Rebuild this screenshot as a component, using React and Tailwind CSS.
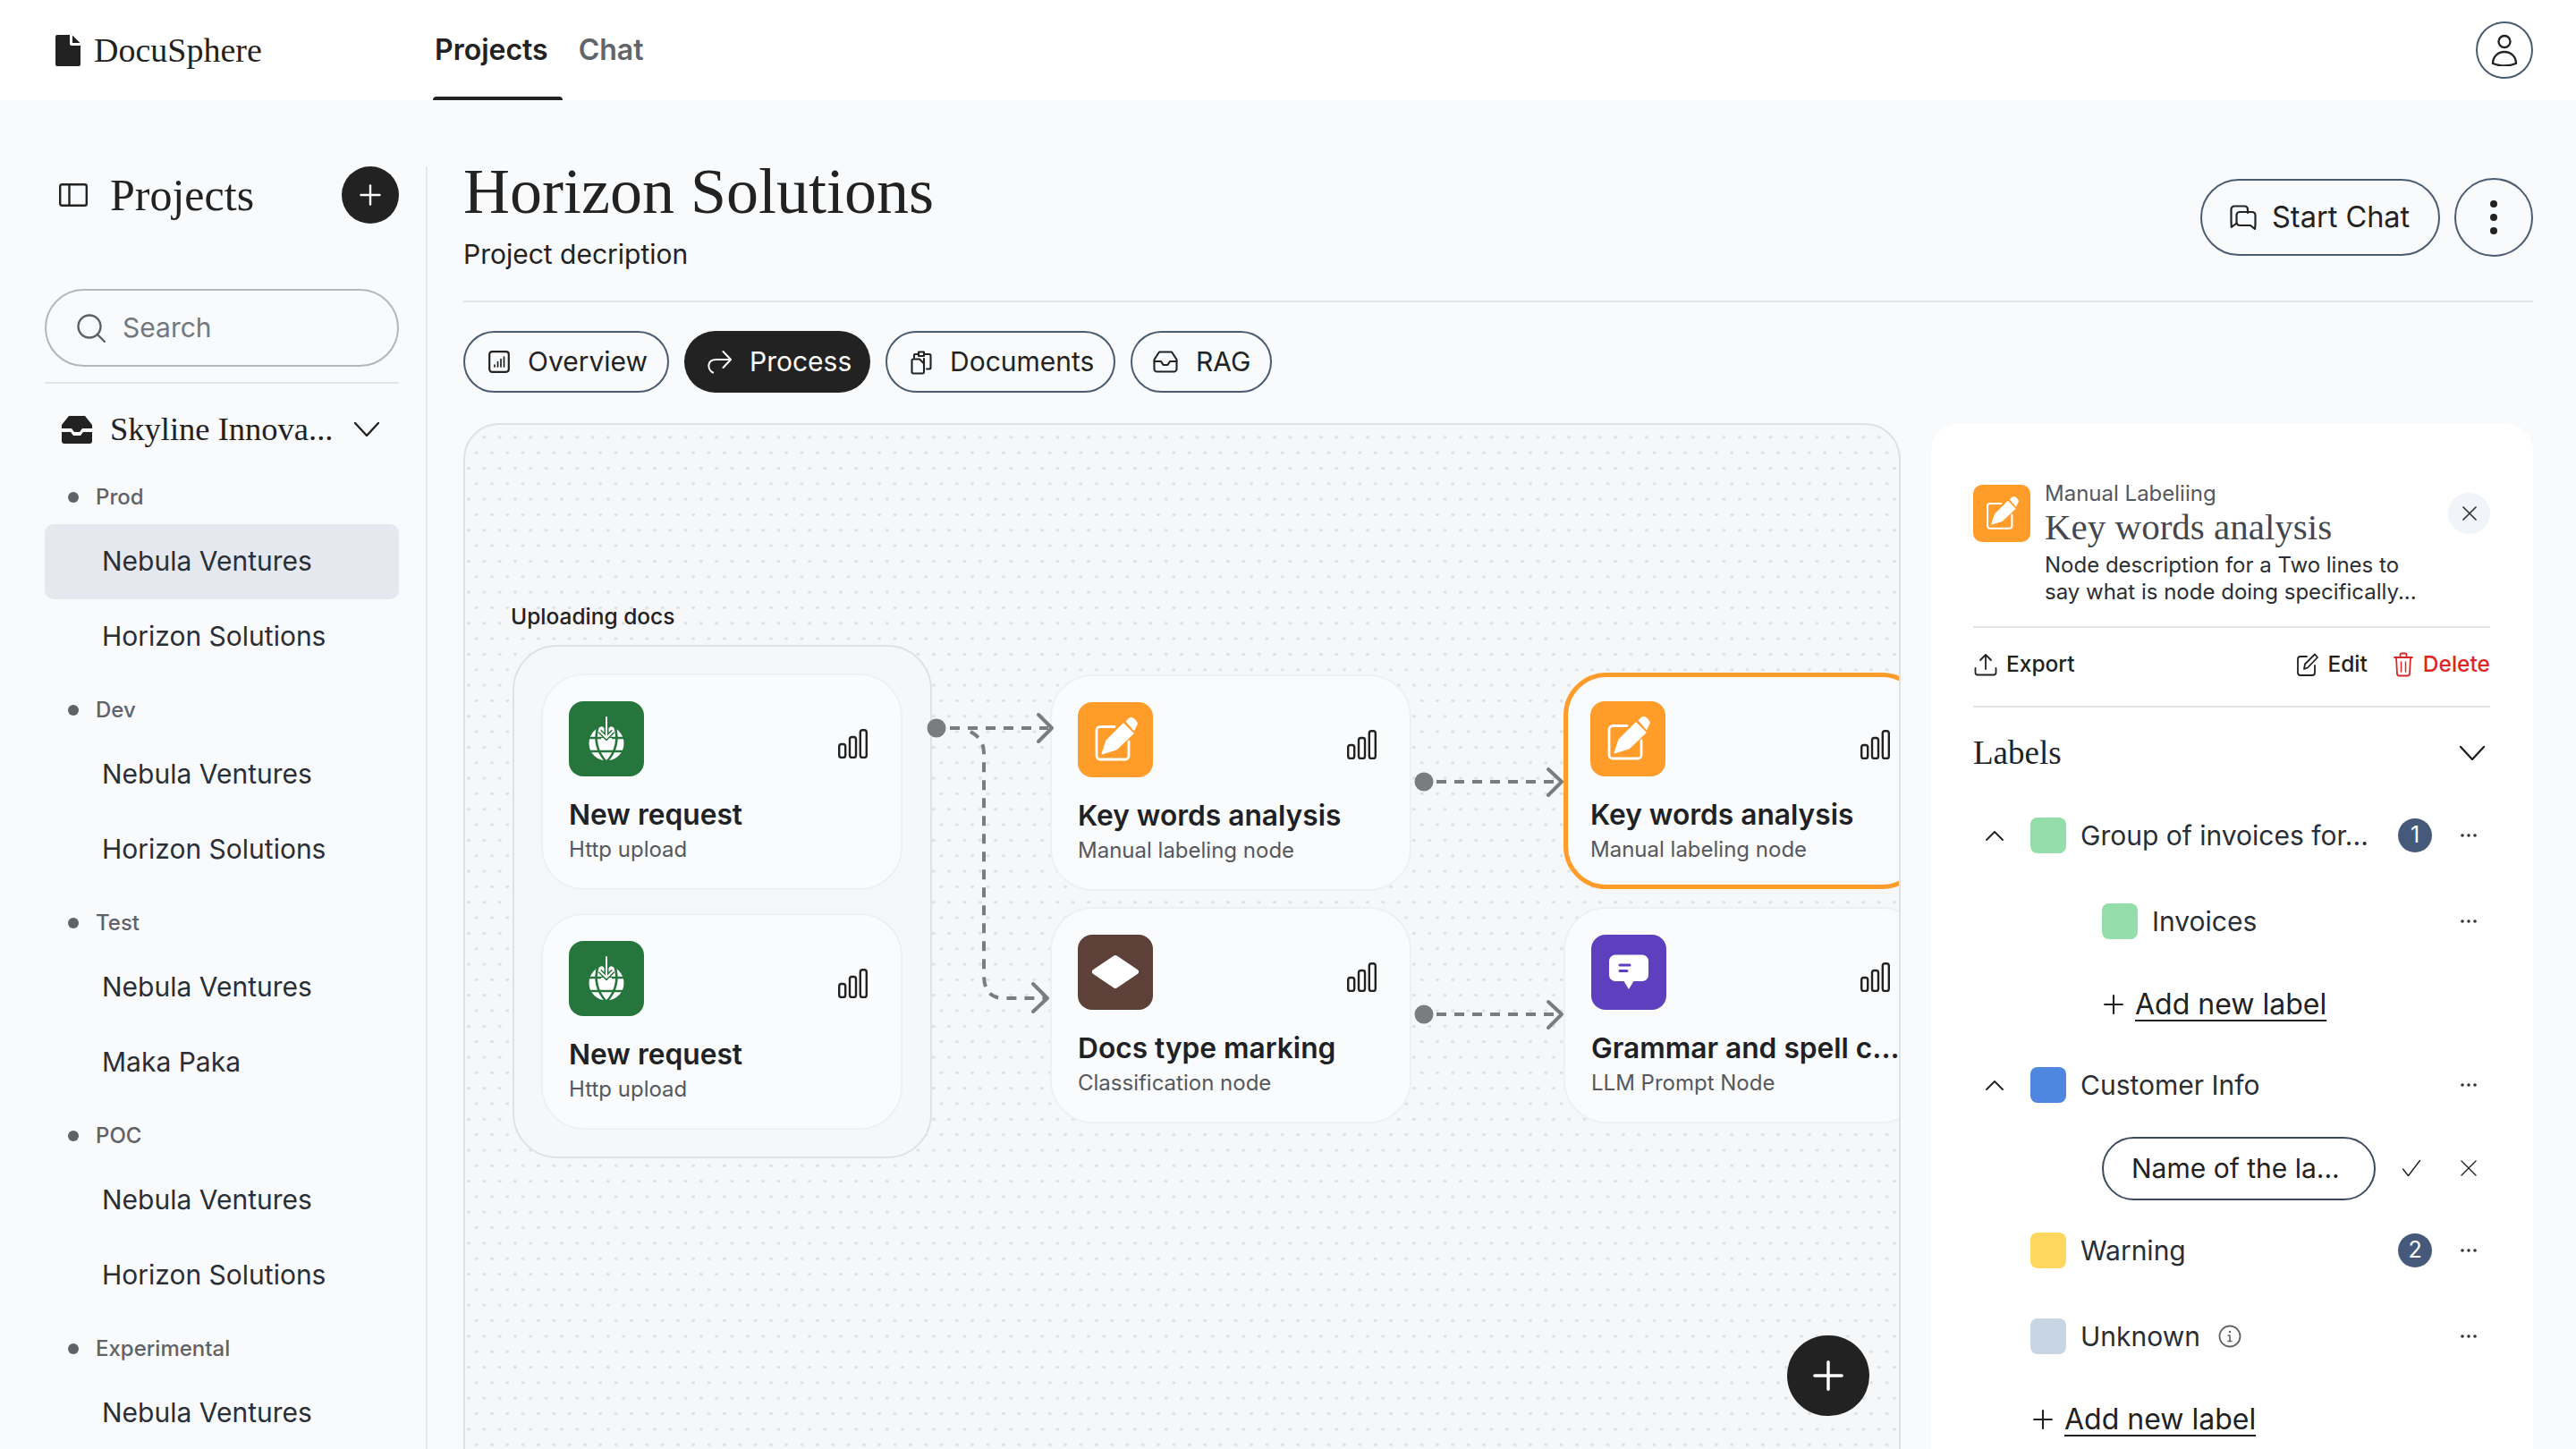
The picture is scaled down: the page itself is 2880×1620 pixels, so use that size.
import { Plus } from 'lucide-react'

const serif = "font-['Liberation_Serif',serif]"

const groups = [
  { name: 'Prod', items: ['Nebula Ventures', 'Horizon Solutions'] },
  { name: 'Dev', items: ['Nebula Ventures', 'Horizon Solutions'] },
  { name: 'Test', items: ['Nebula Ventures', 'Maka Paka'] },
  { name: 'POC', items: ['Nebula Ventures', 'Horizon Solutions'] },
  { name: 'Experimental', items: ['Nebula Ventures'] },
]

function Svg({ w, h, box, children, className = '' }) {
  return (
    <svg
      width={w}
      height={h}
      viewBox={box || `0 0 ${w} ${h}`}
      fill="none"
      stroke="currentColor"
      strokeLinecap="round"
      strokeLinejoin="round"
      className={`shrink-0 ${className}`}
    >
      {children}
    </svg>
  )
}

function Chevron({ up, w = 28, h = 16, sw = 2.4, className }) {
  const d = up ? `M1 ${h - 1}L${w / 2} 1L${w - 1} ${h - 1}` : `M1 1L${w / 2} ${h - 1}L${w - 1} 1`
  return (
    <Svg w={w} h={h} className={className}>
      <path d={d} strokeWidth={sw} />
    </Svg>
  )
}

function Dots() {
  return (
    <svg width="18" height="4" viewBox="0 0 18 4" className="shrink-0 text-[#333]" fill="currentColor">
      <circle cx="2" cy="2" r="1.8" />
      <circle cx="9" cy="2" r="1.8" />
      <circle cx="16" cy="2" r="1.8" />
    </svg>
  )
}

function Bars() {
  return (
    <Svg w={33} h={33} className="text-[#222]">
      <rect x="1.2" y="17" width="7" height="15" rx="2.6" strokeWidth="2.4" />
      <rect x="13" y="9" width="7" height="23" rx="2.6" strokeWidth="2.4" />
      <rect x="24.8" y="1.2" width="7" height="30.8" rx="2.6" strokeWidth="2.4" />
    </Svg>
  )
}

function GlobeIcon() {
  return (
    <svg width="84" height="84" viewBox="0 0 84 84" className="block">
      <circle cx="42" cy="47" r="19.5" fill="#fff" />
      <g fill="none" stroke="#26753c" strokeWidth="2.6">
        <path d="M22 41H62M24 56H60" />
        <path d="M33 27C28 42 31 56 42 68C53 56 56 42 51 27" />
        <path d="M42 30V24" />
      </g>
      <path d="M42 32L32 24H52Z" fill="#26753c" />
      <path d="M36 41H48V52H36Z" fill="#fff" />
      <path d="M42 18V41M34.5 33.5L42 41L49.5 33.5" fill="none" stroke="#26753c" strokeWidth="5" />
      <path d="M42 18V41M34.5 33.5L42 41L49.5 33.5" fill="none" stroke="#fff" strokeWidth="2" strokeLinecap="round" strokeLinejoin="round" />
    </svg>
  )
}

function PencilIcon({ size = 84 }) {
  return (
    <svg width={size} height={size} viewBox="0 0 84 84" className="block">
      <path d="M41 27.5H25a4 4 0 0 0-4 4V60a4 4 0 0 0 4 4H53a4 4 0 0 0 4-4V44" fill="none" stroke="#fff" strokeWidth="2.8" strokeLinecap="round" />
      <path d="M27 58L32 43L51 24L62 35L43 53Z" fill="#fff" stroke="#fff" strokeWidth="1.2" strokeLinejoin="round" />
      <path d="M53.5 21.5L57 18Q60 16 63 18.5L65.5 21Q68 24 65.5 27L63 32.5Z" fill="#fff" />
    </svg>
  )
}

function DiamondIcon() {
  return (
    <svg width="84" height="84" viewBox="0 0 84 84" className="block">
      <path d="M42 26L65 41.5L42 57L19 41.5Z" fill="#fff" stroke="#fff" strokeWidth="6" strokeLinejoin="round" />
    </svg>
  )
}

function BubbleIcon() {
  return (
    <svg width="84" height="84" viewBox="0 0 84 84" className="block">
      <path d="M27 22.5H57a7 7 0 0 1 7 7V45a7 7 0 0 1-7 7H47.5L42 61L36.5 52H27a7 7 0 0 1-7-7V29.5a7 7 0 0 1 7-7Z" fill="#fff" />
      <path d="M32 34H43M32 40.5H40" fill="none" stroke="#5e3fbe" strokeWidth="3" strokeLinecap="round" />
    </svg>
  )
}

function Node({ title, sub, tone, icon, selected, className }) {
  return (
    <div
      className={`w-[404px] h-[242px] rounded-[48px] ${selected ? 'border-[5px] border-[#ff9c2a] pl-[25px] pt-[27px]' : 'border-2 border-[#eef0f2] pl-[29px] pt-[29px]'} bg-[#fafbfc] ${className}`}
    >
      <div className="flex">
        <div className={`w-[84px] h-[84px] rounded-[16px] overflow-hidden ${tone}`}>{icon}</div>
        <div className={selected ? 'absolute left-[327px] top-[59px]' : 'absolute left-[330px] top-[60px]'}>
          <Bars />
        </div>
      </div>
      <div className="mt-[23px] text-[31.7px] leading-[40px] font-semibold text-[#202124] whitespace-nowrap">{title}</div>
      <div className="mt-[2px] text-[24px] leading-[34px] text-[#55585e] whitespace-nowrap">{sub}</div>
    </div>
  )
}

function Tab({ icon, label, active, className }) {
  return (
    <div
      className={`h-[69px] rounded-full flex items-center gap-[20px] text-[30px] whitespace-nowrap ${active ? 'bg-[#222] text-white' : 'border-2 border-[#4b5b70] text-[#222]'} ${className}`}
    >
      {icon}
      <span>{label}</span>
    </div>
  )
}

function Swatch({ color }) {
  return <div className={`w-[40px] h-[40px] rounded-[8px] shrink-0 ${color}`} />
}

function Badge({ n }) {
  return (
    <div className="w-[38px] h-[38px] rounded-full bg-[#46597a] text-white text-[25px] flex items-center justify-center mr-[32px]">
      {n}
    </div>
  )
}

function AddLabel({ className }) {
  return (
    <div className={`flex items-center h-[60px] text-[#222] ${className}`}>
      <Plus size={34} strokeWidth={1.5} className="shrink-0" />
      <span className="ml-[7px] text-[32px] leading-[40px] underline decoration-2 underline-offset-[6px]">Add new label</span>
    </div>
  )
}

export default function App() {
  return (
    <div className="w-[2880px] h-[1620px] overflow-hidden flex flex-col bg-[#f8fafc] font-['Inter',sans-serif] text-[#222]">
      <header className="h-[112px] bg-white flex items-center shrink-0 pl-[62px] pr-[48px]">
        <svg width="28" height="35" viewBox="0 0 28 35" className="shrink-0">
          <path d="M2 0H16V10a2 2 0 0 0 2 2H28V33a2 2 0 0 1-2 2H2a2 2 0 0 1-2-2V2a2 2 0 0 1 2-2Z" fill="#222" />
          <path d="M19 0.5L27.5 9H19Z" fill="#222" />
        </svg>
        <div className={`${serif} ml-[15px] w-[379px] text-[38px] leading-[44px] text-[#222]`}>DocuSphere</div>
        <nav className="flex h-full items-center text-[32px]">
          <div className="relative h-full flex items-center pl-[2px] pr-[16px] font-semibold">
            Projects
            <div className="absolute left-0 right-0 bottom-0 h-[4px] rounded-t-[4px] bg-[#222]" />
          </div>
          <div className="ml-[18px] font-semibold text-[#62656a]">Chat</div>
        </nav>
        <div className="ml-auto w-[64px] h-[64px] rounded-full border-2 border-[#4b5b70] flex items-center justify-center">
          <Svg w={30} h={36} className="text-[#222]">
            <circle cx="15" cy="8.5" r="6.5" strokeWidth="2.4" />
            <path d="M2 33C2 25 8 20 15 20C22 20 28 25 28 33C20 36 10 36 2 33Z" strokeWidth="2.4" />
          </Svg>
        </div>
      </header>

      <div className="flex flex-1 min-h-0 pt-[74px]">
        <aside className="w-[478px] shrink-0 pl-[50px] pr-[30px] border-r-2 border-[#e6e8ec]">
          <div className="h-[64px] flex items-center">
            <Svg w={32} h={26} className="ml-[16px] text-[#222]">
              <rect x="1.2" y="1.2" width="29.6" height="23.6" rx="2" strokeWidth="2.4" />
              <path d="M11.5 1.2V24.8" strokeWidth="2.4" />
            </Svg>
            <div className={`${serif} ml-[25px] text-[50px] leading-[56px]`}>Projects</div>
            <div className="ml-auto w-[64px] h-[64px] rounded-full bg-[#222] flex items-center justify-center text-white">
              <Plus size={36} strokeWidth={1.6} />
            </div>
          </div>
          <div className="mt-[73px] h-[87px] rounded-full border-2 border-[#b4b6ba] flex items-center pl-[34px] text-[30px] text-[#74777c]">
            <Svg w={32} h={32} className="text-[#5c5f64]">
              <circle cx="14" cy="14" r="12.5" strokeWidth="2.4" />
              <path d="M23 23L31 31" strokeWidth="2.4" />
            </Svg>
            <span className="ml-[19px]">Search</span>
          </div>
          <div className="mt-[17px] h-[2px] bg-[#e2e4e8]" />
          <div className="mt-[21px] h-[60px] flex items-center">
            <svg width="36" height="31" viewBox="0 0 36 31" className="ml-[18px] shrink-0">
              <path d="M9 0H27L35 10V14H24L21 18H15L12 14H1V10Z" fill="#222" />
              <path d="M1 18H11L14 22H22L25 18H35V28a3 3 0 0 1-3 3H4a3 3 0 0 1-3-3Z" fill="#222" />
            </svg>
            <div className={`${serif} ml-[19px] text-[36.5px] leading-[48px] whitespace-nowrap`}>Skyline Innova...</div>
            <Chevron className="ml-auto mr-[22px]" />
          </div>
          <div className="mt-[14px]">
            {groups.map((g, gi) => (
              <div key={g.name} className="mb-[8.2px]">
                <div className="h-[62px] pt-[1px] flex items-center pl-[26px] text-[24px] font-medium text-[#5f6368]">
                  <div className="w-[12px] h-[12px] rounded-full bg-[#5f6368]" />
                  <span className="ml-[19px]">{g.name}</span>
                </div>
                {g.items.map((item, i) => (
                  <div
                    key={item}
                    className={`h-[84px] pb-[2px] rounded-[10px] flex items-center pl-[64px] text-[30px] text-[#2a2e35] ${gi === 0 && i === 0 ? 'bg-[#e5e8ef]' : ''}`}
                  >
                    {item}
                  </div>
                ))}
              </div>
            ))}
          </div>
        </aside>

        <main className="flex-1 min-w-0 pl-[40px] pr-[48px] flex flex-col">
          <div className="h-[150px] border-b-2 border-[#e2e4e8] flex justify-between shrink-0 box-content -mb-[1px]">
            <div>
              <h1 className={`${serif} -mt-[2px] text-[72px] leading-[60px] text-[#222] whitespace-nowrap`}>Horizon Solutions</h1>
              <p className="mt-[20px] text-[30px] leading-[40px] text-[#222]">Project decription</p>
            </div>
            <div className="flex gap-[16px] mt-[14px]">
              <div className="h-[86px] w-[268px] rounded-full border-2 border-[#4b5b70] flex items-center pl-[31px] text-[32.500px] text-[#222]">
                <Svg w={30} h={28} className="text-[#222]">
                  <path d="M20 9V5a3.5 3.5 0 0 0-3.5-3.5H5A3.5 3.5 0 0 0 1.5 5V19L1.8 25L7 21" strokeWidth="2.2" />
                  <path d="M11 8H25a3.5 3.5 0 0 1 3.5 3.5V22L28 27L23 23H11a3.5 3.5 0 0 1-3.5-3.5V11.5A3.5 3.5 0 0 1 11 8Z" strokeWidth="2.2" />
                </Svg>
                <span className="ml-[17px]">Start Chat</span>
              </div>
              <div className="w-[88px] h-[88px] -mt-[1px] rounded-full border-2 border-[#4b5b70] flex flex-col items-center justify-center gap-[7px]">
                <div className="w-[8px] h-[8px] rounded-full bg-[#222]" />
                <div className="w-[8px] h-[8px] rounded-full bg-[#222]" />
                <div className="w-[8px] h-[8px] rounded-full bg-[#222]" />
              </div>
            </div>
          </div>

          <div className="mt-[33px] flex gap-[17px] shrink-0">
            <Tab
              className="w-[230px] pl-[26px]"
              label="Overview"
              icon={
                <Svg w={24} h={25}>
                  <rect x="1.2" y="1.2" width="21.6" height="22.6" rx="3" strokeWidth="2.2" />
                  <path d="M7 18V16M10.5 18V12.5M14 18V9.5M17.5 18V7" strokeWidth="1.7" />
                </Svg>
              }
            />
            <Tab
              className="w-[208px] pl-[25px]"
              active
              label="Process"
              icon={
                <Svg w={28} h={27}>
                  <path d="M7 25.5C1 22.5 -0.5 11 11 11H26M18.5 2L27 11L18.5 20" strokeWidth="2" />
                </Svg>
              }
            />
            <Tab
              className="w-[257px] pl-[26px]"
              label="Documents"
              icon={
                <Svg w={24} h={28}>
                  <path d="M8 5H5a1 1 0 0 0-1 1V9M16 5H21a1.5 1.5 0 0 1 1.5 1.5V20a1.5 1.5 0 0 1-1.5 1.5H18" strokeWidth="2.1" />
                  <path d="M9 2.5H15V7H9Z" strokeWidth="2.1" />
                  <path d="M3 10.5H10L15 15.5V25a1.5 1.5 0 0 1-1.5 1.5H3A1.5 1.5 0 0 1 1.5 25V12a1.5 1.5 0 0 1 1.5-1.5Z" strokeWidth="2.1" />
                  <path d="M15 10V15.5" strokeWidth="2.1" />
                </Svg>
              }
            />
            <Tab
              className="w-[158px] pl-[23px] gap-[18px]"
              label="RAG"
              icon={
                <Svg w={28} h={25}>
                  <path d="M7 1.5H21L26.5 10V20.5a3 3 0 0 1-3 3H4.5a3 3 0 0 1-3-3V10Z" strokeWidth="2.1" />
                  <path d="M1.5 12H9L11.5 16H16.5L19 12H26.5" strokeWidth="2.1" />
                </Svg>
              }
            />
          </div>

          <div className="mt-[34px] flex flex-1 min-h-0">
            <section className="relative w-[1607px] h-[1200px] shrink-0 overflow-hidden rounded-t-[40px] border-2 border-[#e0e1e4] bg-[#f6f7f9] bg-[radial-gradient(circle,#dddfe3_1.6px,transparent_1.9px),radial-gradient(circle,#dddfe3_1.6px,transparent_1.9px)] bg-[length:17.33px_34.66px] bg-[position:12.6px_31.2px,3.95px_13.9px]">
              <div className="absolute left-[51px] top-[199px] text-[24.5px] leading-[30px] font-medium text-[#222]">Uploading docs</div>

              <div className="absolute left-[53px] top-[246px] w-[469px] h-[574px] rounded-[50px] border-2 border-[#dfe1e5] bg-[#f6f7f9] pl-[30px] pt-[30px] flex flex-col gap-[26px]">
                <Node className="relative" title="New request" sub="Http upload" tone="bg-[#26753c]" icon={<GlobeIcon />} />
                <Node className="relative" title="New request" sub="Http upload" tone="bg-[#26753c]" icon={<GlobeIcon />} />
              </div>

              <Node className="absolute left-[654px] top-[279px]" title="Key words analysis" sub="Manual labeling node" tone="bg-[#ff9c2a]" icon={<PencilIcon />} />
              <Node className="absolute left-[654px] top-[539px]" title="Docs type marking" sub="Classification node" tone="bg-[#5d4037]" icon={<DiamondIcon />} />
              <Node selected className="absolute left-[1228px] top-[277px]" title="Key words analysis" sub="Manual labeling node" tone="bg-[#ff9c2a]" icon={<PencilIcon />} />
              <Node className="absolute left-[1228px] top-[539px]" title="Grammar and spell c..." sub="LLM Prompt Node" tone="bg-[#5e3fbe]" icon={<BubbleIcon />} />

              <svg width="1604" height="900" viewBox="520 475 1604 900" fill="none" className="absolute left-0 top-0 text-[#7b7c7e]" stroke="currentColor" strokeLinecap="round" strokeLinejoin="round">
                <circle cx="1047" cy="814" r="10.5" fill="currentColor" stroke="none" />
                <circle cx="1592" cy="874" r="10.5" fill="currentColor" stroke="none" />
                <circle cx="1592" cy="1134" r="10.5" fill="currentColor" stroke="none" />
                <g strokeWidth="4" strokeDasharray="11 9" strokeLinecap="butt">
                  <path d="M1062 814H1172" />
                  <path d="M1085 818Q1100 826 1100 842V1090Q1100 1116 1122 1116H1168" />
                  <path d="M1606 874H1742" />
                  <path d="M1606 1134H1742" />
                </g>
                <g strokeWidth="4">
                  <path d="M1161 799L1176 814L1161 829" />
                  <path d="M1155 1100L1171 1116L1155 1131" />
                  <path d="M1731 860L1746 874L1731 889" />
                  <path d="M1731 1120L1746 1134L1731 1149" />
                </g>
              </svg>

              <div className="absolute left-[1478px] top-[1018px] w-[92px] h-[90px] rounded-full bg-[#222] flex items-center justify-center text-white">
                <Plus size={52} strokeWidth={1.6} />
              </div>
            </section>

            <section className="ml-[34px] flex-1 min-w-0 h-[1200px] bg-white rounded-t-[32px] pl-[47px] pr-[48px] pt-[64px]">
              <div className="flex">
                <div className="w-[64px] h-[64px] mt-[5px] rounded-[10px] overflow-hidden bg-[#ff9c2a] shrink-0">
                  <PencilIcon size={64} />
                </div>
                <div className="ml-[16px]">
                  <div className="text-[24px] leading-[30px] text-[#55585e]">Manual Labeliing</div>
                  <div className={`${serif} -mt-[1px] text-[41px] leading-[46px] text-[#44474d] whitespace-nowrap`}>Key words analysis</div>
                  <div className="mt-[5px] text-[24px] leading-[30px] text-[#2a2e35] whitespace-nowrap">
                    Node description for a Two lines to
                    <br />
                    say what is node doing specifically...
                  </div>
                </div>
                <div className="ml-auto mt-[14px] w-[47px] h-[46px] rounded-full bg-[#f1f4f8] flex items-center justify-center text-[#333] shrink-0">
                  <Svg w={16} h={16}>
                    <path d="M1 1L15 15M15 1L1 15" strokeWidth="1.7" />
                  </Svg>
                </div>
              </div>
              <div className="mt-[23px] h-[2px] bg-[#e2e4e8]" />
              <div className="h-[81px] pb-[6px] flex items-center text-[24.5px] font-medium border-b-2 border-[#e2e4e8] box-content">
                <Svg w={26} h={26} className="ml-[1px] text-[#222]">
                  <path d="M13 18V2M7 8L13 2L19 8" strokeWidth="1.8" />
                  <path d="M1.5 17V22a2.5 2.5 0 0 0 2.5 2.5H22a2.5 2.5 0 0 0 2.5-2.5V17" strokeWidth="1.8" />
                </Svg>
                <span className="ml-[10px]">Export</span>
                <Svg w={24} h={26} className="ml-auto text-[#222]">
                  <path d="M11 4H4a3 3 0 0 0-3 3V22a3 3 0 0 0 3 3H17a3 3 0 0 0 3-3V14" strokeWidth="1.8" />
                  <path d="M8 18L9 12.5L20 1.5L23 5L12 16.5Z" strokeWidth="1.8" />
                </Svg>
                <span className="ml-[10px]">Edit</span>
                <Svg w={22} h={28} className="ml-[29px] text-[#dc2626]">
                  <path d="M1 6H21M7.5 6V3a1.5 1.5 0 0 1 1.5-1.5H13A1.5 1.5 0 0 1 14.5 3V6" strokeWidth="1.8" />
                  <path d="M3 6L4 24a2.5 2.5 0 0 0 2.5 2.5H15.500A2.5 2.5 0 0 0 18 24L19 6" strokeWidth="1.8" />
                  <path d="M8.500 11V22M13.500 11V22" strokeWidth="1.5" />
                </Svg>
                <span className="ml-[11px] text-[#dc2626]">Delete</span>
              </div>
              <div className="h-[102px] flex items-center justify-between pr-[6px]">
                <div className={`${serif} text-[37px] leading-[48px] text-[#222]`}>Labels</div>
                <Chevron className="text-[#222]" />
              </div>

              <div className="text-[30px] text-[#2a2e35]">
                <div className="mt-[11px] h-[60px] flex items-center pl-[14px]">
                  <Chevron up w={20} h={11} sw={1.9} className="text-[#222]" />
                  <div className="ml-[30px]">
                    <Swatch color="bg-[#93deaa]" />
                  </div>
                  <span className="ml-[16px] whitespace-nowrap">Group of invoices for...</span>
                  <div className="ml-auto flex items-center pr-[15px]">
                    <Badge n="1" />
                    <Dots />
                  </div>
                </div>
                <div className="mt-[36px] h-[60px] flex items-center pl-[144px]">
                  <Swatch color="bg-[#93deaa]" />
                  <span className="ml-[16px]">Invoices</span>
                  <div className="ml-auto pr-[15px]">
                    <Dots />
                  </div>
                </div>
                <AddLabel className="mt-[33px] pl-[140px]" />
                <div className="mt-[30px] h-[60px] flex items-center pl-[14px]">
                  <Chevron up w={20} h={11} sw={1.9} className="text-[#222]" />
                  <div className="ml-[30px]">
                    <Swatch color="bg-[#4f86e0]" />
                  </div>
                  <span className="ml-[16px]">Customer Info</span>
                  <div className="ml-auto pr-[15px]">
                    <Dots />
                  </div>
                </div>
                <div className="mt-[33px] h-[60px] flex items-center pl-[144px]">
                  <div className="shrink-0 w-[306px] h-[71px] rounded-full border-2 border-[#3d4a5e] flex items-center pl-[31px] text-[#222] whitespace-nowrap">
                    Name of the la...
                  </div>
                  <Svg w={22} h={20} className="ml-[29px] text-[#222]">
                    <path d="M1.5 11L7.500 18.500L20.500 1.500" strokeWidth="1.4" />
                  </Svg>
                  <Svg w={18} h={18} className="ml-auto mr-[15px] text-[#222]">
                    <path d="M1 1L17 17M17 1L1 17" strokeWidth="1.4" />
                  </Svg>
                </div>
                <div className="mt-[32px] h-[60px] flex items-center pl-[64px]">
                  <Swatch color="bg-[#ffd75e]" />
                  <span className="ml-[16px]">Warning</span>
                  <div className="ml-auto flex items-center pr-[15px]">
                    <Badge n="2" />
                    <Dots />
                  </div>
                </div>
                <div className="mt-[36px] h-[60px] flex items-center pl-[64px]">
                  <Swatch color="bg-[#c8d5e3]" />
                  <span className="ml-[16px]">Unknown</span>
                  <Svg w={26} h={26} className="ml-[20px] text-[#5f6368]">
                    <circle cx="13" cy="13" r="11.500" strokeWidth="1.8" />
                    <path d="M13 12V18.500M11 12H13M11 18.500H15" strokeWidth="1.6" />
                    <circle cx="13" cy="8" r="1.200" fill="currentColor" stroke="none" />
                  </Svg>
                  <div className="ml-auto pr-[15px]">
                    <Dots />
                  </div>
                </div>
                <AddLabel className="mt-[33px] pl-[61px]" />
              </div>
            </section>
          </div>
        </main>
      </div>
    </div>
  )
}
